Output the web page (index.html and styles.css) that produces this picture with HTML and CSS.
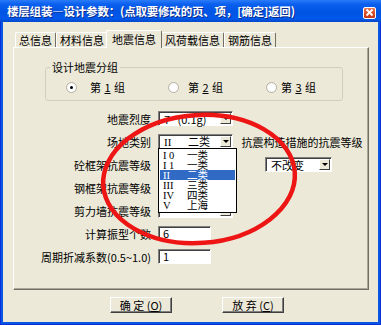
FILE: index.html
```html
<!DOCTYPE html>
<html lang="zh-CN">
<head>
  <meta charset="UTF-8">
  <title>楼层组装—设计参数</title>
  <link rel="stylesheet" href="styles.css">
</head>
<body>
  <div class="window">
    <!-- Title bar -->
    <div class="titlebar">
      <span class="title">楼层组装—设计参数：(点取要修改的页、项，[确定]返回)</span>
      <span class="close">
        <svg width="9" height="9" viewBox="0 0 9 9"><path d="M1.5 1.5 L7.5 7.5 M7.5 1.5 L1.5 7.5" stroke="#fff" stroke-width="1.8"/></svg>
      </span>
    </div>

    <div class="client">
      <!-- Tabs -->
      <div class="tabs">
        <span class="tab">总信息</span>
        <span class="tab">材料信息</span>
        <span class="tab active">地震信息</span>
        <span class="tab">风荷载信息</span>
        <span class="tab">钢筋信息</span>
      </div>

      <div class="panel">
        <fieldset class="group">
          <legend>设计地震分组</legend>
          <div class="radios">
            <label class="opt opt1"><span class="radio checked"></span><span>第 <u>1</u> 组</span></label>
            <label class="opt opt2"><span class="radio"></span><span>第 <u>2</u> 组</span></label>
            <label class="opt opt3"><span class="radio"></span><span>第 <u>3</u> 组</span></label>
          </div>
        </fieldset>

        <div class="form">
          <span class="label">地震烈度</span>
          <div class="combo"><span class="value">7&nbsp;&nbsp;&nbsp;(0.1g)</span><span class="arrow"></span></div>
          <span></span>

          <span class="label">场地类别</span>
          <div class="combo">
            <span class="value"><span class="roman">II</span>二类</span><span class="arrow"></span>
            <!-- open dropdown list -->
            <div class="droplist">
              <div class="item"><span class="roman">I 0</span>一类</div>
              <div class="item"><span class="roman">I 1</span>一类</div>
              <div class="item selected"><span class="roman">II</span>二类</div>
              <div class="item"><span class="roman">III</span>三类</div>
              <div class="item"><span class="roman">IV</span>四类</div>
              <div class="item"><span class="roman">V</span>上海</div>
            </div>
          </div>
          <span class="side-title">抗震构造措施的抗震等级</span>

          <span class="label">砼框架抗震等级</span>
          <div class="combo"><span class="value"></span><span class="arrow"></span></div>
          <div class="combo small"><span class="value">不改变</span><span class="arrow"></span></div>

          <span class="label">钢框架抗震等级</span>
          <div class="combo"><span class="value"></span><span class="arrow"></span></div>
          <span></span>

          <span class="label">剪力墙抗震等级</span>
          <div class="combo"><span class="value"></span><span class="arrow"></span></div>
          <span></span>

          <span class="label">计算振型个数</span>
          <div class="input">6</div>
          <span></span>

          <span class="label">周期折减系数(0.5~1.0)</span>
          <div class="input">1</div>
          <span></span>
        </div>
      </div>

      <!-- Buttons -->
      <div class="actions">
        <button class="btn">确&nbsp;定&nbsp;(<u>O</u>)</button>
        <button class="btn">放&nbsp;弃&nbsp;(<u>C</u>)</button>
      </div>
    </div>

    <!-- red hand-drawn mark -->
    <svg class="ink" width="381" height="325" viewBox="0 0 381 325">
      <ellipse cx="199" cy="179" rx="96" ry="64" transform="rotate(-4 199 179)" fill="none" stroke="#ee1515" stroke-width="4.5"/>
    </svg>
  </div>
</body>
</html>
```

FILE: styles.css
```css
/* Reset */
* {
  margin: 0;
  padding: 0;
  box-sizing: border-box;
}

body {
  width: 381px;
  height: 325px;
  overflow: hidden;
  font-family: "Noto Sans CJK SC", "Liberation Sans", sans-serif;
  font-size: 11px;
  color: #000;
  background: #fff;
}

/* Window frame */
.window {
  position: relative;
  width: 381px;
  height: 325px;
  display: flex;
  flex-direction: column;
  background: #0a55e4;
  border-left: 1px solid #0831d9;
  border-right: 1px solid #0831d9;
  border-bottom: 1px solid #0831d9;
}

.titlebar {
  height: 22px;
  margin: 0 -1px;
  padding: 0 5px 0 7px;
  display: flex;
  align-items: center;
  justify-content: space-between;
  background: linear-gradient(#2a7cf8, #0a5fee 20%, #0054e3 55%, #0159ec 85%, #0647c8);
}

.title {
  color: #fff;
  font-weight: bold;
  font-size: 11.5px;
  letter-spacing: -0.2px;
  text-shadow: 1px 1px #0b2a8a;
}

.close {
  width: 13px;
  height: 12px;
  margin-top: 3px;
  border: 1px solid #fff;
  border-radius: 2px;
  background: linear-gradient(#e8795a, #d6461f 60%, #c0381a);
  display: flex;
  align-items: center;
  justify-content: center;
}

.client {
  flex: 1;
  margin: 0 2px 2px;
  padding-top: 8px;
  background: #ece9d8;
  display: flex;
  flex-direction: column;
}

/* Tabs */
.tabs {
  display: flex;
  align-items: flex-end;
  height: 17px;
  padding-left: 12px;
}

.tab {
  height: 15px;
  line-height: 14px;
  padding: 0 3px;
  border-top: 1px solid #fff;
  border-left: 1px solid #fff;
  border-right: 1px solid #716f64;
  border-radius: 2px 2px 0 0;
  white-space: nowrap;
}

.tab.active {
  position: relative;
  z-index: 1;
  height: 18px;
  margin: 0 -1px -1px -2px;
  padding: 1px 5px 0;
  background: #ece9d8;
}

/* Tab page */
.panel {
  height: 243px;
  margin: 0 9px 0 10px;
  border: 1px solid;
  border-color: #fff #716f64 #716f64 #fff;
  box-shadow: inset -1px -1px #aca899;
}

.group {
  width: 298px;
  margin: 13px 0 0 31px;
  padding: 6px 0;
  border: 1px solid #d0d0bf;
  border-radius: 3px;
}

.group legend {
  margin-left: 4px;
  padding: 0 2px;
  line-height: 13px;
}

.radios {
  display: flex;
  height: 14px;
  align-items: center;
  margin-left: 20px;
}

.opt {
  display: flex;
  align-items: center;
  white-space: pre;
}

.opt u {
  margin: 0 1px;
}

.opt1 { gap: 13px; width: 102px; }
.opt2 { gap: 9px; width: 98px; }
.opt3 { gap: 4px; }

.radio {
  width: 11px;
  height: 11px;
  border-radius: 50%;
  border: 1px solid #b5b2a5;
  background: radial-gradient(circle at 60% 60%, #fff 55%, #e6e4dc);
  display: flex;
  align-items: center;
  justify-content: center;
}

.radio.checked::after {
  content: "";
  width: 3px;
  height: 3px;
  background: #000;
  border-radius: 50%;
}

/* Form rows */
.form {
  display: grid;
  grid-template-columns: 144px 82px 124px;
  grid-auto-rows: 23px;
  align-items: center;
  margin-top: 6px;
}

.label {
  text-align: right;
  padding-right: 7px;
  white-space: nowrap;
}

.combo {
  position: relative;
  width: 75px;
  height: 15px;
  display: flex;
  align-items: center;
  justify-content: space-between;
  background: #fff;
  border: 1px solid;
  border-color: #808080 #fff #fff #808080;
  box-shadow: inset 1px 1px #404040;
  padding: 0 1px 0 5px;
}

.combo.small {
  width: 67px;
  margin-left: 25px;
}

.value {
  line-height: 12px;
  white-space: nowrap;
}

.roman {
  display: inline-block;
  width: 24px;
  font-family: "Liberation Serif", serif;
}

.arrow {
  width: 11px;
  height: 11px;
  background: #ece9d8;
  border: 1px solid;
  border-color: #fff #404040 #404040 #fff;
  display: flex;
  align-items: center;
  justify-content: center;
}

.arrow::after {
  content: "";
  border-left: 3px solid transparent;
  border-right: 3px solid transparent;
  border-top: 3px solid #000;
}

.side-title {
  justify-self: center;
  white-space: nowrap;
}

.droplist {
  position: absolute;
  z-index: 2;
  top: 100%;
  left: -1px;
  width: 79px;
  height: 65px;
  background: #fff;
  border: 1px solid #000;
  padding: 1px;
  font-size: 10.5px;
}

.item {
  height: 10px;
  line-height: 10px;
  padding-left: 3px;
  white-space: nowrap;
}

.item.selected {
  background: #316ac5;
  color: #fff;
}

.input {
  width: 53px;
  height: 15px;
  line-height: 13px;
  padding-left: 4px;
  background: #fff;
  border: 1px solid;
  border-color: #808080 #fff #fff #808080;
  box-shadow: inset 1px 1px #404040;
}

/* Buttons */
.actions {
  display: flex;
  gap: 50px;
  padding: 7px 0 0 107px;
}

.btn {
  width: 62px;
  height: 16px;
  font: inherit;
  line-height: 12px;
  background: #ece9d8;
  border: 1px solid;
  border-color: #fff #404040 #404040 #fff;
  box-shadow: inset -1px -1px #808080;
}

/* Red mark drawn over the dialog */
.ink {
  position: absolute;
  left: -1px;
  top: 0;
  pointer-events: none;
  z-index: 5;
}
```
